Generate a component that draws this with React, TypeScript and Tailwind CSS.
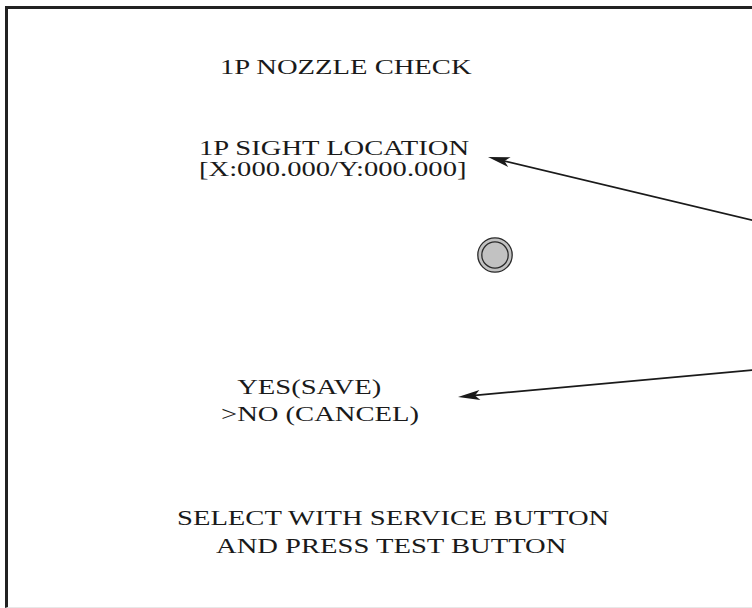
import React from "react";

function Arrows() {
  return (
    <svg
      className="absolute left-0 top-0 pointer-events-none"
      width={752}
      height={608}
      viewBox="0 0 752 608"
    >
      <line x1={760} y1={222} x2={500} y2={160} stroke="#1a1a1a" strokeWidth={1.7} />
      <polygon points="488,157 508.2,167 504.5,160.9 510.6,157.2" fill="#1a1a1a" />
      <line x1={760} y1={369.3} x2={472} y2={395.7} stroke="#1a1a1a" strokeWidth={1.7} />
      <polygon points="458,397 480.4,400 474.9,395.4 479.4,390" fill="#1a1a1a" />
    </svg>
  );
}

function Nozzle() {
  return (
    <svg width={36} height={36} viewBox="0 0 36 36">
      <circle cx={18} cy={18} r={17.2} fill="#c2c2c2" stroke="#2a2a2a" strokeWidth={1.3} />
      <circle cx={18} cy={18} r={13.2} fill="#c2c2c2" stroke="#2a2a2a" strokeWidth={1.3} />
    </svg>
  );
}

export default function App() {
  return (
    <div className="relative w-[752px] h-[608px] overflow-hidden bg-white text-[#1a1a1a] font-['Liberation_Serif',serif] text-[22px]">
      <div className="ml-[5px] mt-[6px] w-[800px] h-[602px] border-l-[3px] border-t-[3px] border-b border-l-[#222] border-t-[#222] border-b-[#e8e8e8]">
        <div className="flex flex-col items-start">
          <div className="mt-[47px] ml-[212px] leading-[22px] whitespace-nowrap origin-left scale-x-[1.3]">
            1P NOZZLE CHECK
          </div>
          <div className="mt-[59px] ml-[191px] whitespace-nowrap origin-left scale-x-[1.3] flex flex-col">
            <div className="leading-[21px] h-[21px]">1P SIGHT LOCATION</div>
            <div className="leading-[21px] h-[21px]">[X:000.000/Y:000.000]</div>
          </div>
          <div className="mt-[58px] ml-[469px] flex">
            <Nozzle />
          </div>
          <div className="mt-[100px] ml-[213px] leading-[27px] whitespace-nowrap origin-left scale-x-[1.3]">
            <div>
              <span className="invisible">&gt;</span>YES(SAVE)
            </div>
            <div>&gt;NO (CANCEL)</div>
          </div>
          <div className="mt-[77px] leading-[28px] whitespace-nowrap">
            <div className="ml-[169px] origin-left scale-x-[1.3]">SELECT WITH SERVICE BUTTON</div>
            <div className="ml-[208px] origin-left scale-x-[1.3]">AND PRESS TEST BUTTON</div>
          </div>
        </div>
      </div>
      <Arrows />
    </div>
  );
}
